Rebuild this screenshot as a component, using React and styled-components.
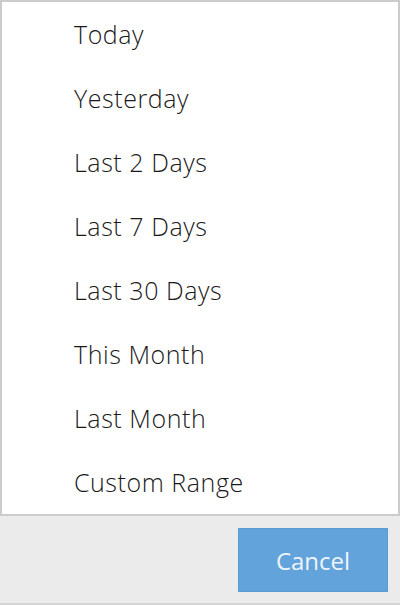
import React from 'react';
import styled, { createGlobalStyle } from 'styled-components';

const GlobalStyle = createGlobalStyle`
  html, body {
    margin: 0;
    padding: 0;
    background: #ebebeb;
  }
  body {
    font-family: "Open Sans", "Liberation Sans", sans-serif;
  }
`;

const Sheet = styled.div`
  width: 400px;
  height: 605px;
  display: flex;
  flex-direction: column;
  background: #ebebeb;
  border-bottom: 2px solid #d4d4d4;
  box-sizing: border-box;
`;

const RangeList = styled.ul`
  list-style: none;
  margin: 0;
  padding: 0;
  background: #fff;
  border: 2px solid #cccccc;
`;

const RangeItem = styled.li`
  height: 64px;
  display: flex;
  align-items: center;
  padding-left: 72px;
  box-sizing: border-box;
  font-size: 25px;
  font-weight: 300;
  color: #1a1a1a;
  letter-spacing: 0.55px;
`;

const Footer = styled.div`
  flex: 1;
  display: flex;
  justify-content: flex-end;
  align-items: flex-start;
  padding: 12px 12px 0 0;
`;

const CancelButton = styled.button`
  width: 150px;
  height: 64px;
  background: #62a3db;
  border: 1px solid #5a9bd2;
  color: #eef5fb;
  font-family: "Open Sans", "Liberation Sans", sans-serif;
  font-size: 24px;
  font-weight: 400;
  padding: 0;
  cursor: pointer;
`;

const ranges = [
  'Today',
  'Yesterday',
  'Last 2 Days',
  'Last 7 Days',
  'Last 30 Days',
  'This Month',
  'Last Month',
  'Custom Range',
];

const App = () => {
  return (
    <>
      <GlobalStyle />
      <Sheet>
        <RangeList>
          {ranges.map((r) => (
            <RangeItem key={r}>{r}</RangeItem>
          ))}
        </RangeList>
        <Footer>
          <CancelButton>Cancel</CancelButton>
        </Footer>
      </Sheet>
    </>
  );
};

export default App;
